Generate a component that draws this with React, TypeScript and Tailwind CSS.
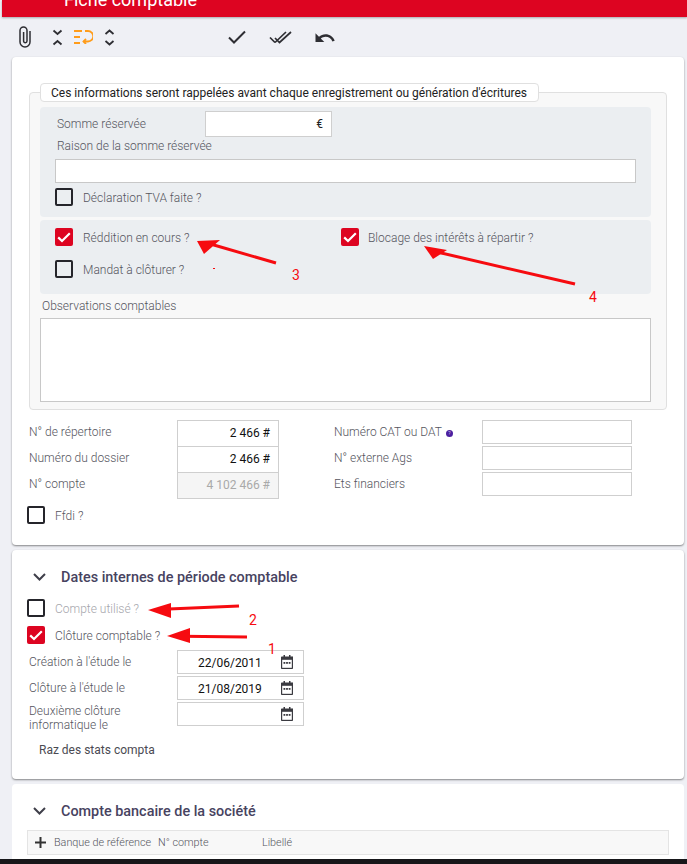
import React from "react";

function Box({ on = false, className = "" }: { on?: boolean; className?: string }) {
  return on ? (
    <span className={"flex h-[18px] w-[18px] shrink-0 items-center justify-center rounded-[2px] bg-[#dd0421] " + className}>
      <svg width="14" height="11" viewBox="0 0 14 11" fill="none"><path d="M1.200 5.400 5 9 12.800 1.300" stroke="#fff" strokeWidth="2.200" /></svg>
    </span>
  ) : (
    <span className={"block h-[18px] w-[18px] shrink-0 rounded-[2px] border-2 border-[#25252b] " + className} />
  );
}

function Calendar() {
  return (
    <svg width="12" height="14" viewBox="0 0 12 14" className="shrink-0">
      <path d="M2.500 0h1.500v1.500h4V0h1.500v1.500h1.200A.8.800 0 0 1 12 2.300v10.900a.8.800 0 0 1-.8.800H.8a.8.800 0 0 1-.8-.8V2.300a.8.800 0 0 1 .8-.8h1.700z" fill="#3a3a40" />
      <rect x="1.200" y="4.800" width="9.600" height="8" fill="#fff" />
      <rect x="2.500" y="7" width="1.800" height="1.800" fill="#3a3a40" /><rect x="5.100" y="7" width="1.800" height="1.800" fill="#3a3a40" /><rect x="7.700" y="7" width="1.800" height="1.800" fill="#3a3a40" />
    </svg>
  );
}

function Chevron() {
  return (
    <svg width="13" height="8" viewBox="0 0 13 8" fill="none" className="shrink-0"><path d="M1 1l5.500 5.500L12 1" stroke="#3f3f4a" strokeWidth="2" /></svg>
  );
}

function NumRow({ label, value, disabled = false }: { label: string; value: string; disabled?: boolean }) {
  return (
    <div className="flex h-[26px] items-start">
      <span className="w-[148px] pt-[5px] font-light text-[#55555e]">{label}</span>
      <span className={"flex h-[27px] w-[102px] items-center justify-end border border-[#cfcfcf] pb-[2px] pr-[8px] " + (disabled ? "bg-[#f5f5f5] text-[#a9a9a9]" : "bg-white text-[#111]")}>{value}</span>
    </div>
  );
}

function TextRow({ label, icon = false }: { label: string; icon?: boolean }) {
  return (
    <div className="flex h-[26px] items-start">
      <span className="flex w-[148px] items-center gap-[4px] pt-[5px] font-light text-[#55555e]">
        {label}
        {icon && <span className="mt-[2px] flex h-[7px] w-[7px] items-center justify-center rounded-full bg-[#4b1fa0] text-[5px] leading-none text-white">?</span>}
      </span>
      <span className="h-[24px] w-[150px] border border-[#cfcfcf] bg-white" />
    </div>
  );
}

function DateRow({ label, value, twoLines = false }: { label: React.ReactNode; value?: string; twoLines?: boolean }) {
  return (
    <div className="flex h-[26px] items-start">
      <span className={"w-[148px] font-light text-[#55555e] " + (twoLines ? "pt-[2px] leading-[14px]" : "pt-[5px]")}>{label}</span>
      <span className="flex h-[24px] w-[127px] items-center border border-[#cfcfcf] bg-white">
        <span className="w-[103px] pl-[20px] pt-[2px] text-[#111]">{value}</span>
        <Calendar />
      </span>
    </div>
  );
}

function Annotations() {
  const arrows: [number, number, number, number, string][] = [
    [276, 263, 198, 241, "204,254 197,241 220,240"],
    [575, 284, 424, 246, "433,259 424,246 447,250"],
    [239, 606, 148, 610, "171,603 148,610 171,618"],
    [247, 637, 167, 636, "190,628 167,636 190,643"],
  ];
  return (
    <>
      <svg className="pointer-events-none absolute left-0 top-0" width="687" height="864" fill="none">
        {arrows.map(([x1, y1, x2, y2, p]) => (
          <g key={p}>
            <line x1={x1} y1={y1} x2={x2 + 15} y2={y2 + (y1 - y2) * 0.17} stroke="#f60b10" strokeWidth="3" />
            <polygon points={p} fill="#f60b10" />
          </g>
        ))}
        <rect x="213" y="268" width="2" height="1" fill="#f60b10" />
      </svg>
      <span className="absolute left-[292px] top-[267px] text-[14px] leading-[16px] text-[#f60b10]">3</span>
      <span className="absolute left-[589px] top-[289px] text-[14px] leading-[16px] text-[#f60b10]">4</span>
      <span className="absolute left-[249px] top-[612px] text-[14px] leading-[16px] text-[#f60b10]">2</span>
      <span className="absolute left-[268px] top-[641px] text-[14px] leading-[16px] text-[#f60b10]">1</span>
    </>
  );
}

export default function App() {
  return (
    <div className="relative flex h-[864px] w-[687px] flex-col overflow-hidden bg-[#eff0f5] font-['Roboto',sans-serif] text-[12px] leading-[14px]">
      {/* Header */}
      <div className="ml-[2px] flex h-[17px] shrink-0 items-start overflow-hidden bg-[#dd0421] pl-[62px] shadow-[0_1px_2px_rgba(0,0,0,0.3)]">
        <span className="mt-[-11px] text-[18px] leading-[21px] text-white">Fiche comptable</span>
      </div>

      {/* Toolbar */}
      <div className="flex h-[40px] shrink-0 items-center pl-[19px]">
        <svg width="12" height="22" viewBox="0 0 12 22" fill="none" stroke="#2e2e33" strokeWidth="1.500" className="mt-[-1px]">
          <path d="M11 5v11a5 5 0 0 1-10 0V4.500a3.500 3.500 0 0 1 7 0V15a1.700 1.700 0 0 1-3.400 0V6" />
        </svg>
        <svg width="11" height="17" viewBox="0 0 11 17" fill="none" stroke="#2e2e33" strokeWidth="1.800" className="ml-[21px]">
          <path d="M1.500 1.500 5.500 5l4-3.500M1.500 15.500 5.500 12l4 3.500" />
        </svg>
        <svg width="19" height="14" viewBox="0 0 19 14" fill="none" stroke="#ff9c1a" strokeWidth="1.800" className="ml-[11px]">
          <path d="M0 1h8M0 7h6M0 13h6M11 1h3a5 5 0 0 1 0 10.500H9.500" /><path d="M12 9l-2.500 2.500L12 14" />
        </svg>
        <svg width="11" height="17" viewBox="0 0 11 17" fill="none" stroke="#2e2e33" strokeWidth="1.800" className="ml-[11px]">
          <path d="M1.500 5 5.500 1.500l4 3.500M1.500 12 5.500 15.500l4-3.500" />
        </svg>
        <svg width="18" height="14" viewBox="0 0 18 14" fill="none" stroke="#2e2e33" strokeWidth="2" className="ml-[113px]">
          <path d="M1 7.500 6 12.500 17 1.500" />
        </svg>
        <svg width="23" height="14" viewBox="0 0 23 14" fill="none" stroke="#2e2e33" strokeWidth="1.700" className="ml-[23px]">
          <path d="M1 7.500 6 12.500M6 12.500 17 2M6 8l4.500 4.500L22 2" />
        </svg>
        <svg width="21" height="12" viewBox="0 0 21 12" className="ml-[23px]">
          <path d="M10.500 3.300c-2.500 0-4.700.9-6.500 2.400L.5 2.200V11h8.800L5.800 7.500c1.300-1.100 3-1.800 4.800-1.800 3.100 0 5.800 2 6.800 4.800l2.300-.8C18.300 5.900 14.700 3.300 10.500 3.300z" fill="#2e2e33" />
        </svg>
      </div>

      {/* Card 1 */}
      <div className="ml-[12px] h-[488px] w-[672px] shrink-0 rounded-[4px] bg-white pl-[17px] pt-[35px] shadow-[0_1px_2px_rgba(0,0,0,0.45)]">
        <div className="relative h-[318px] w-[638px] rounded-[4px] border border-[#e0e0e0] bg-[#f8f8f8] pb-[7px] pl-[10px] pr-[15px] pt-[14px]">
          <span className="absolute left-[10px] top-[-10px] flex h-[19px] w-[499px] items-center rounded-[4px] border border-[#e0e0e0] bg-white pl-[10px] text-[#222]">
            Ces informations seront rappelées avant chaque enregistrement ou génération d'écritures
          </span>

          <div className="h-[110px] rounded-[4px] bg-[#ebeef1] pl-[15px] pt-[4px] font-light text-[#55555e]">
            <div className="flex h-[26px]">
              <span className="w-[150px] pl-[2px] pt-[6px]">Somme réservée</span>
              <span className="flex h-[26px] w-[127px] items-center justify-end border border-[#cfcfcf] bg-white pr-[8px] font-normal text-[#222]">€</span>
            </div>
            <div className="pl-[2px] pt-[2px]">Raison de la somme réservée</div>
            <div className="mt-[6px] h-[24px] w-[581px] border border-[#c8c8c8] bg-white" />
            <div className="mt-[5px] flex items-center gap-[10px]">
              <Box /><span className="pt-[2px]">Déclaration TVA faite ?</span>
            </div>
          </div>

          <div className="mt-[3px] h-[74px] rounded-[4px] bg-[#ebeef1] pl-[15px] pt-[8px] font-light text-[#55555e]">
            <div className="flex h-[32px] items-start">
              <div className="flex w-[286px] items-center gap-[10px]"><Box on /><span className="pt-[2px]">Réddition en cours ?</span></div>
              <div className="flex items-center gap-[9px]"><Box on /><span className="pt-[2px]">Blocage des intérêts à répartir ?</span></div>
            </div>
            <div className="flex items-center gap-[10px]"><Box /><span className="pt-[2px]">Mandat à clôturer ?</span></div>
          </div>

          <div className="pl-[2px] pt-[5px] font-light text-[#55555e]">Observations comptables</div>
          <div className="mt-[5px] h-[84px] w-[611px] border border-[#c8c8c8] bg-white" />
        </div>

        <div className="mt-[10px] flex">
          <div className="w-[305px]">
            <NumRow label="N° de répertoire" value="2 466 #" />
            <NumRow label="Numéro du dossier" value="2 466 #" />
            <NumRow label="N° compte" value="4 102 466 #" disabled />
          </div>
          <div>
            <TextRow label="Numéro CAT ou DAT" icon />
            <TextRow label="N° externe Ags" />
            <TextRow label="Ets financiers" />
          </div>
        </div>
        <div className="mt-[8px] flex items-center gap-[10px] font-light text-[#55555e]">
          <Box className="ml-[-2px]" /><span className="pt-[2px]">Ffdi ?</span>
        </div>
      </div>

      {/* Card 2 */}
      <div className="ml-[12px] mt-[5px] h-[229px] w-[672px] shrink-0 rounded-[4px] bg-white pl-[17px] pt-[20px] shadow-[0_1px_2px_rgba(0,0,0,0.45)]">
        <div className="flex h-[14px] items-center gap-[15px] pl-[4px]">
          <Chevron />
          <span className="pt-[2px] text-[14.400px] font-medium text-[#47435f]">Dates internes de période comptable</span>
        </div>
        <div className="ml-[-2px] mt-[15px] flex items-center gap-[10px] font-light text-[#a6a6ac]"><Box /><span className="pt-[2px]">Compte utilisé ?</span></div>
        <div className="ml-[-2px] mt-[9px] flex items-center gap-[10px] font-light text-[#55555e]"><Box on /><span className="pt-[2px]">Clôture comptable ?</span></div>
        <div className="mt-[6px]">
          <DateRow label="Création à l'étude le" value="22/06/2011" />
          <DateRow label="Clôture à l'étude le" value="21/08/2019" />
          <DateRow label={<>Deuxième clôture<br />informatique le</>} twoLines />
        </div>
        <div className="pl-[10px] pt-[15px] text-[#4a4a52]">Raz des stats compta</div>
      </div>

      {/* Card 3 */}
      <div className="ml-[12px] mt-[5px] w-[672px] flex-1 rounded-t-[4px] bg-white pl-[15px] pt-[20px]">
        <div className="flex h-[14px] items-center gap-[15px] pl-[6px]">
          <Chevron />
          <span className="pt-[2px] text-[14.400px] font-medium text-[#47435f]">Compte bancaire de la société</span>
        </div>
        <div className="mt-[12px] flex h-[25px] w-[642px] items-center border border-[#e4e4e4] bg-[#f8f8f8] text-[10.800px] font-light text-[#55555e]">
          <svg width="11" height="11" viewBox="0 0 11 11" className="ml-[7px] shrink-0"><path d="M4.500 0h2v4.500H11v2H6.500V11h-2V6.500H0v-2h4.500z" fill="#333" /></svg>
          <span className="w-[112px] whitespace-nowrap pl-[8px]">Banque de référence</span>
          <span className="w-[104px]">N° compte</span>
          <span>Libellé</span>
        </div>
      </div>

      {/* Bottom edge */}
      <div className="h-[5px] shrink-0 bg-[#17171a]" />

      <Annotations />
    </div>
  );
}
